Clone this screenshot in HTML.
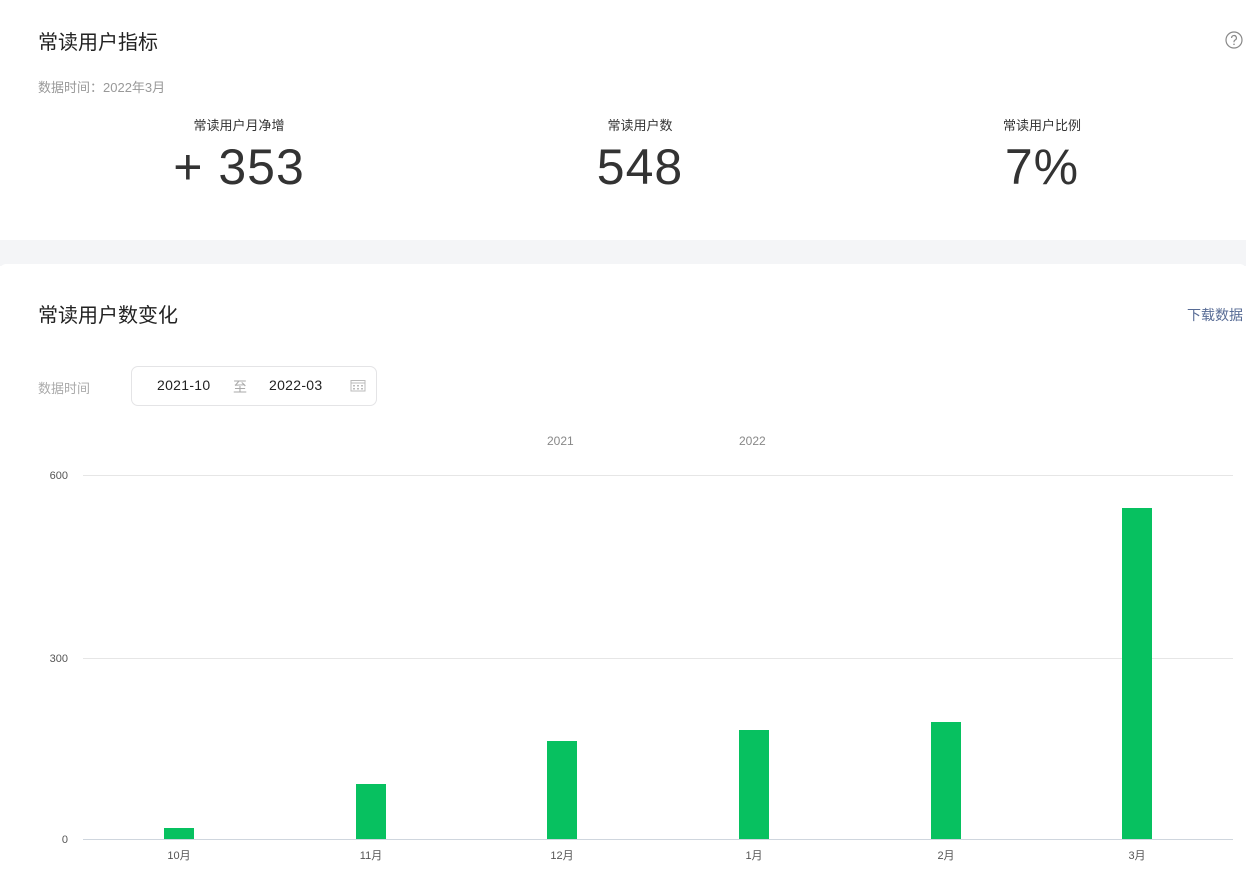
<!DOCTYPE html>
<html><head><meta charset="utf-8"><style>
*{margin:0;padding:0;box-sizing:border-box}
body{width:1246px;height:877px;background:#fff;font-family:"Liberation Sans","Noto Sans CJK SC",sans-serif;position:relative;overflow:hidden;color:#333}
.a{position:absolute;white-space:nowrap}
.gl{position:absolute;left:83px;width:1150px;height:1px;background:#e6e6e6}
.bar{position:absolute;width:30px;background:#07c160}
.xl{position:absolute;top:847px;width:60px;text-align:center;font-size:11px;color:#555}
.yl{position:absolute;left:30px;width:38px;text-align:right;font-size:11px;color:#555}
.big{font-size:50px;letter-spacing:1px}
</style></head><body>
<div class="a" style="left:0;top:240px;width:1246px;height:26px;background:#f4f5f7"></div>
<div class="a" style="left:0;top:264px;width:1246px;height:10px;background:#fff;border-radius:6px 6px 0 0"></div>
<div class="a" style="left:38px;top:26px;font-size:20px;color:#222">常读用户指标</div>
<svg class="a" style="left:1225px;top:31px" width="18" height="18" viewBox="0 0 18 18"><circle cx="9" cy="9" r="8" fill="none" stroke="#888" stroke-width="1.2"/><path d="M6.6 7a2.4 2.4 0 1 1 3.4 2.1c-.7.4-1 .8-1 1.6v.6" fill="none" stroke="#888" stroke-width="1.2"/><circle cx="9" cy="13.3" r=".8" fill="#888"/></svg>
<div class="a" style="left:38px;top:77px;font-size:13px;color:#999">数据时间：2022年3月</div>
<div class="a" style="left:139px;width:200px;text-align:center;top:115px;font-size:13px;color:#333">常读用户月净增</div>
<div class="a big" style="left:89px;width:300px;text-align:center;top:138px;color:#333">+ 353</div>
<div class="a" style="left:540px;width:200px;text-align:center;top:115px;font-size:13px">常读用户数</div>
<div class="a big" style="left:490px;width:300px;text-align:center;top:138px">548</div>
<div class="a" style="left:942px;width:200px;text-align:center;top:115px;font-size:13px">常读用户比例</div>
<div class="a big" style="left:892px;width:300px;text-align:center;top:138px">7%</div>

<div class="a" style="left:38px;top:299px;font-size:20px;color:#222">常读用户数变化</div>
<div class="a" style="left:1187px;top:305px;font-size:14px;color:#576b95">下载数据</div>
<div class="a" style="left:38px;top:378px;font-size:13px;color:#aaa">数据时间</div>
<div class="a" style="left:131px;top:366px;width:246px;height:40px;border:1px solid #e4e4e6;border-radius:7px"></div>
<div class="a" style="left:157px;top:377px;font-size:14px;color:#222;letter-spacing:.3px">2021-10</div>
<div class="a" style="left:233px;top:377px;font-size:14px;color:#aaa">至</div>
<div class="a" style="left:269px;top:377px;font-size:14px;color:#222;letter-spacing:.3px">2022-03</div>
<svg class="a" style="left:350px;top:379px" width="16" height="13" viewBox="0 0 16 13"><rect x="1" y="1.5" width="14" height="10.5" fill="none" stroke="#bbb"/><line x1="1" y1="4" x2="15" y2="4" stroke="#bbb"/><g fill="#bbb"><rect x="3" y="6" width="2" height="1.5"/><rect x="7" y="6" width="2" height="1.5"/><rect x="11" y="6" width="2" height="1.5"/><rect x="3" y="9" width="2" height="1.5"/><rect x="7" y="9" width="2" height="1.5"/><rect x="11" y="9" width="2" height="1.5"/></g></svg>

<div class="a" style="left:547px;top:434px;font-size:12px;color:#888">2021</div>
<div class="a" style="left:739px;top:434px;font-size:12px;color:#888">2022</div>

<div class="gl" style="top:475px"></div>
<div class="gl" style="top:658px"></div>
<div class="gl" style="top:839px;background:#cfd6de"></div>
<div class="yl" style="top:470px">600</div>
<div class="yl" style="top:653px">300</div>
<div class="yl" style="top:834px">0</div>

<div class="bar" style="left:164px;top:828px;height:11px"></div>
<div class="bar" style="left:356px;top:784px;height:55px"></div>
<div class="bar" style="left:547px;top:741px;height:98px"></div>
<div class="bar" style="left:739px;top:730px;height:109px"></div>
<div class="bar" style="left:931px;top:722px;height:117px"></div>
<div class="bar" style="left:1122px;top:508px;height:331px"></div>

<div class="xl" style="left:149px">10月</div>
<div class="xl" style="left:341px">11月</div>
<div class="xl" style="left:532px">12月</div>
<div class="xl" style="left:724px">1月</div>
<div class="xl" style="left:916px">2月</div>
<div class="xl" style="left:1107px">3月</div>
</body></html>
